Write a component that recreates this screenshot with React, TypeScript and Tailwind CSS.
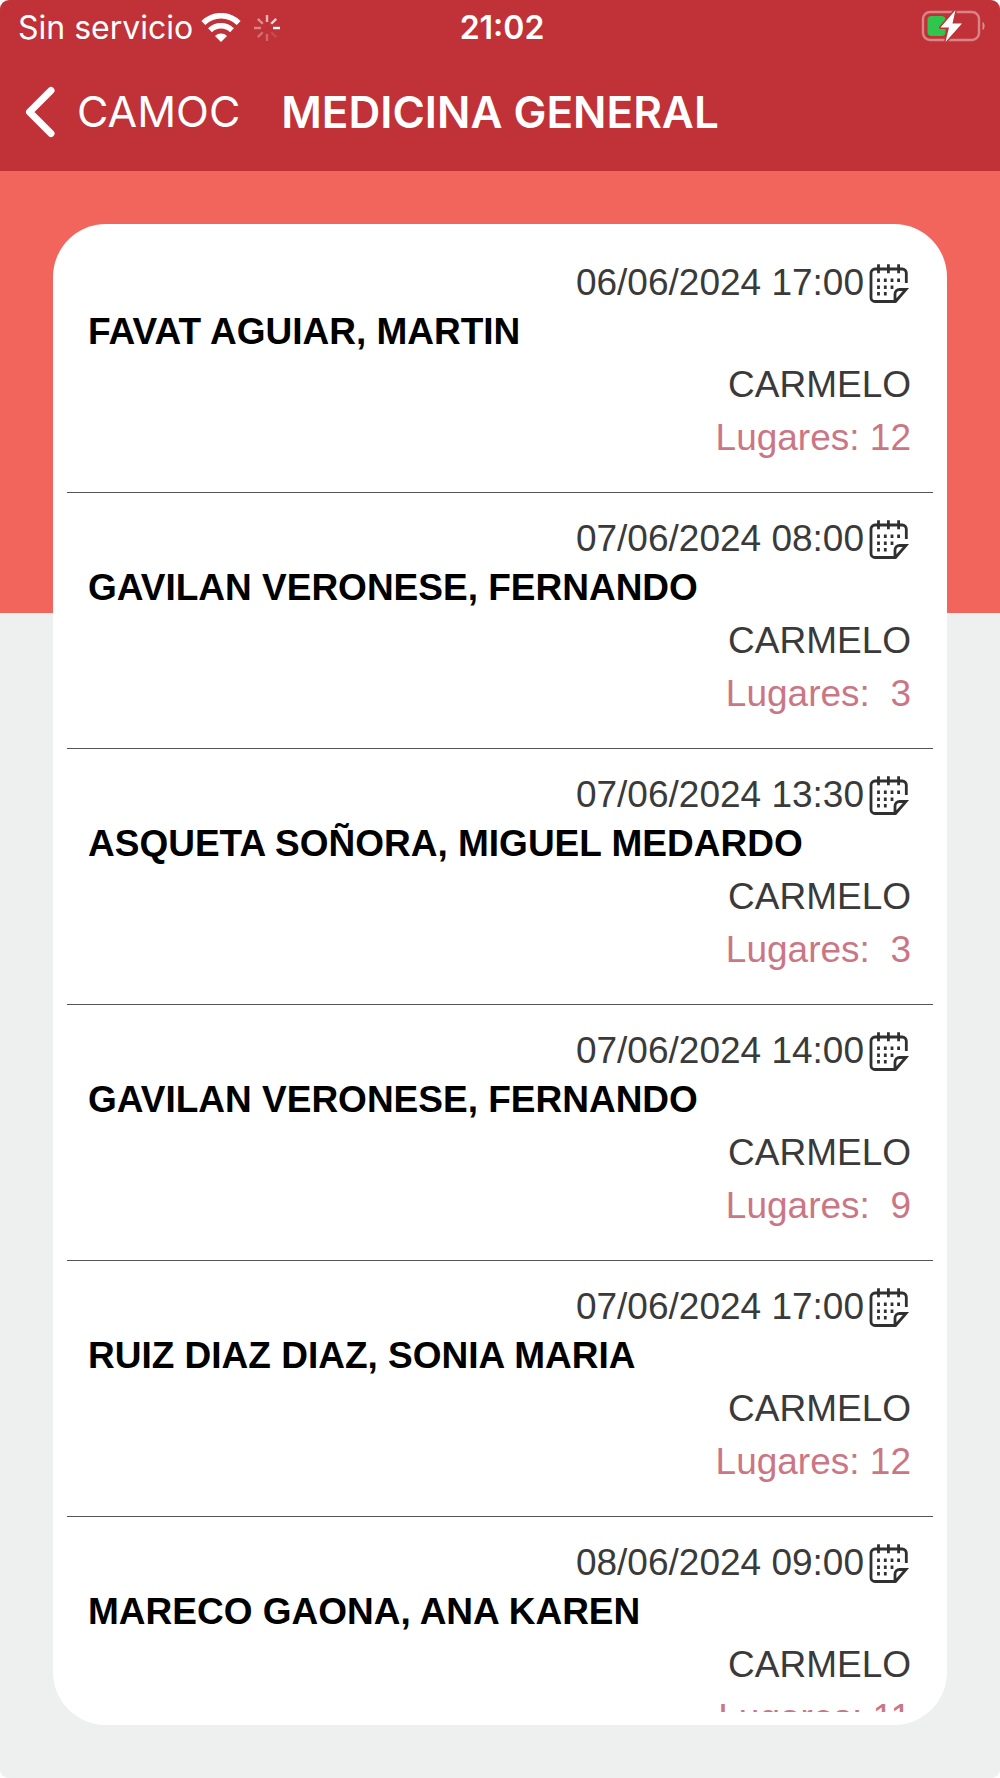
type Turno = {
  fecha: string
  medico: string
  sede: string
  lugares: number
}

const turnos: Turno[] = [
  { fecha: '06/06/2024 17:00', medico: 'FAVAT AGUIAR, MARTIN', sede: 'CARMELO', lugares: 12 },
  { fecha: '07/06/2024 08:00', medico: 'GAVILAN VERONESE, FERNANDO', sede: 'CARMELO', lugares: 3 },
  { fecha: '07/06/2024 13:30', medico: 'ASQUETA SOÑORA, MIGUEL MEDARDO', sede: 'CARMELO', lugares: 3 },
  { fecha: '07/06/2024 14:00', medico: 'GAVILAN VERONESE, FERNANDO', sede: 'CARMELO', lugares: 9 },
  { fecha: '07/06/2024 17:00', medico: 'RUIZ DIAZ DIAZ, SONIA MARIA', sede: 'CARMELO', lugares: 12 },
  { fecha: '08/06/2024 09:00', medico: 'MARECO GAONA, ANA KAREN', sede: 'CARMELO', lugares: 11 },
]

function WifiIcon() {
  return (
    <svg viewBox="0 0 40 30" className="h-[30px] w-10" fill="none" stroke="currentColor" strokeWidth="5.5" aria-hidden="true">
      <path d="M2.3 10a25 25 0 0 1 35.4 0" />
      <path d="M9 17.2a15.6 15.6 0 0 1 22 0" />
      <path d="M20 29l-6-6.1a8.5 8.5 0 0 1 12 0z" fill="currentColor" stroke="none" />
    </svg>
  )
}

function Spinner() {
  const rays = [0.65, 0.85, 1, 0.12, 0.25, 0.3, 0.4, 0.45]
  return (
    <svg viewBox="0 0 28 28" className="size-7" stroke="currentColor" strokeWidth="2.4" aria-hidden="true">
      {rays.map((opacity, i) => (
        <path key={i} d="M14 1v7" opacity={opacity} transform={`rotate(${i * 45} 14 14)`} />
      ))}
    </svg>
  )
}

function BatteryIcon() {
  return (
    <svg viewBox="0 0 66 34" className="h-[34px] w-[66px]" fill="none" role="img" aria-label="Cargando">
      <rect x="3" y="3" width="56" height="28" rx="7" stroke="#fff" strokeOpacity="0.4" strokeWidth="2.4" />
      <path d="M62.5 13c2.8 1 2.8 7 0 8z" fill="#fff" fillOpacity="0.45" />
      <rect x="7.500" y="7" width="18" height="20" rx="4" fill="#30c54c" />
      <path
        d="M35.500 1L20.500 18.500h8.500L25.500 33 42 14.500h-9.500z"
        fill="#fff"
        stroke="#c03238"
        strokeWidth="3"
        paintOrder="stroke"
        strokeLinejoin="round"
      />
    </svg>
  )
}

function CalendarIcon() {
  return (
    <svg viewBox="0 -2 43 43" className="size-[43px]" fill="none" stroke="#303030" strokeWidth="2.8" aria-hidden="true">
      <path d="M38.300 20V10a4 4 0 0 0-4-4H7a4 4 0 0 0-4 4v24.500a4 4 0 0 0 4 4h20.500L38 26.500h-6.500a4.500 4.500 0 0 0-4.500 4.500v7" />
      <path d="M10.500 1.300v9M20.400 1.300v9M30.600 1.300v9" />
      <path d="M10.500 15.500v3.500M17.300 15.500v3.500M24 15.500v3.500M30.600 15.500v3.500M10.500 22.500v3.500M17.300 22.500v3.500M24 22.500v3.500M10.500 29v3.500M17.300 29v3.500" />
    </svg>
  )
}

function StatusBar() {
  return (
    <div className="grid grid-cols-[1fr_auto_1fr] items-center pt-1 pr-[14px] pl-[18px] text-[32px] leading-[48px]">
      <div className="flex items-center">
        <span className="mr-2">Sin servicio</span>
        <WifiIcon />
        <span className="ml-3 flex">
          <Spinner />
        </span>
      </div>
      <span className="font-semibold">21:02</span>
      <div className="flex justify-end pb-1">
        <BatteryIcon />
      </div>
    </div>
  )
}

function TurnoRow({ turno }: { turno: Turno }) {
  return (
    <li className="h-64 shrink-0 border-b border-[#555] pt-[23px] pr-[22px] pl-[21px] leading-[53px]">
      <div className="flex h-[45px] items-center justify-end gap-1">
        <time>{turno.fecha}</time>
        <CalendarIcon />
      </div>
      <h2 className="font-bold text-black">{turno.medico}</h2>
      <p className="text-right">{turno.sede}</p>
      <p className="text-right whitespace-pre text-[#cb7685]">Lugares: {String(turno.lugares).padStart(2)}</p>
    </li>
  )
}

export default function App() {
  return (
    <div className="flex h-screen flex-col overflow-hidden rounded-[9px] bg-[#eef0f0]">
      <header className="bg-[#c03238] font-['Inter',sans-serif] text-white">
        <StatusBar />
        <nav className="grid h-[119px] grid-cols-[1fr_auto_1fr] items-center px-6 text-[44px]">
          <button type="button" className="flex items-center gap-[22px] text-[43px] font-normal">
            <svg viewBox="0 0 31 52" className="h-[52px] w-[31px]" fill="none" stroke="currentColor" strokeWidth="7" strokeLinecap="round" strokeLinejoin="round" aria-hidden="true">
              <path d="M27 4.500L5.500 26 27 47.500" />
            </svg>
            CAMOC
          </button>
          <h1 className="font-semibold">MEDICINA GENERAL</h1>
        </nav>
      </header>
      <main className="flex min-h-0 flex-1 flex-col bg-[linear-gradient(#f2655d_442px,#eef0f0_442px)] p-[53px]">
        <section className="flex min-h-0 flex-1 flex-col rounded-[53px] bg-white px-[14px] py-[13px]">
          <ul className="flex min-h-0 flex-1 flex-col overflow-hidden font-['Liberation_Sans',sans-serif] text-[37px] text-[#3a3a3a]">
            {turnos.map((turno) => (
              <TurnoRow key={turno.fecha} turno={turno} />
            ))}
          </ul>
        </section>
      </main>
    </div>
  )
}
